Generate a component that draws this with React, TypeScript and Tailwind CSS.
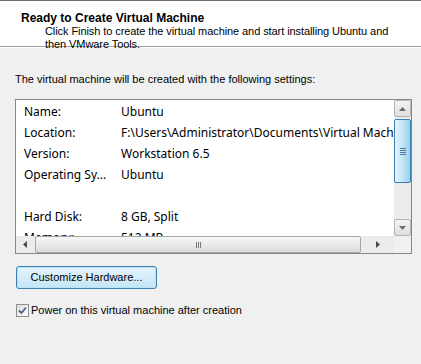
import React from "react";

const rows: [string, string][] = [
  ["Name:", "Ubuntu"],
  ["Location:", "F:\\Users\\Administrator\\Documents\\Virtual Machines\\Ubuntu"],
  ["Version:", "Workstation 6.5"],
  ["Operating Sy...", "Ubuntu"],
  ["", ""],
  ["Hard Disk:", "8 GB, Split"],
  ["Memory:", "512 MB"],
];

function ArrowUp() {
  return (
    <svg width="7" height="4" viewBox="0 0 7 4"><path d="M0 4 L3.5 0 L7 4 Z" fill="#6b6b6b" /></svg>
  );
}
function ArrowDown() {
  return (
    <svg width="7" height="4" viewBox="0 0 7 4"><path d="M0 0 L3.5 4 L7 0 Z" fill="#6b6b6b" /></svg>
  );
}
function ArrowLeft() {
  return (
    <svg width="4" height="7" viewBox="0 0 4 7"><path d="M4 0 L0 3.5 L4 7 Z" fill="#4a4a4a" /></svg>
  );
}
function ArrowRight() {
  return (
    <svg width="4" height="7" viewBox="0 0 4 7"><path d="M0 0 L4 3.5 L0 7 Z" fill="#4a4a4a" /></svg>
  );
}

export default function App() {
  return (
    <div className="w-[421px] h-[364px] bg-[#f0f0f0] overflow-hidden text-black" style={{ fontFamily: "'Liberation Sans', sans-serif" }}>
      <div className="h-[1px] bg-[#6e6e6e]" />
      <div className="h-[46px] bg-white border-b border-[#a0a0a0] pl-[21px] pt-[10px]">
        <div className="text-[12px] leading-[14px] font-bold">Ready to Create Virtual Machine</div>
        <div className="pl-[24px] text-[11px] leading-[13px] tracking-[-0.08px]">
          <div>Click Finish to create the virtual machine and start installing Ubuntu and</div>
          <div>then VMware Tools.</div>
        </div>
      </div>
      <div className="h-[1px] bg-white" />
      <div className="pl-[15px] pr-[10px]">
        <div className="mt-[25px] text-[11px] leading-[13px]">
          The virtual machine will be created with the following settings:
        </div>
        <div className="mt-[13px] w-[397px] h-[155px] border border-[#828790] bg-white flex flex-col">
          <div className="flex flex-1 min-h-0">
            <div className="flex-1 overflow-hidden pt-[1px] pl-[8px]" style={{ fontFamily: "'Noto Sans', sans-serif" }}>
              {rows.map(([k, v], i) => (
                <div key={i} className="flex h-[21px] items-center text-[12px] whitespace-nowrap">
                  <div className="w-[97px] shrink-0">{k}</div>
                  <div>{v}</div>
                </div>
              ))}
            </div>
            <div className="w-[17px] shrink-0 bg-[#ebebeb] flex flex-col">
              <div className="h-[17px] border border-[#b5b5b5] rounded-[2px] bg-gradient-to-b from-[#f4f4f4] to-[#dedede] flex items-center justify-center"><ArrowUp /></div>
              <div className="mt-[2px] h-[64px] border border-[#3c7fb1] rounded-[2px] bg-gradient-to-r from-[#e3f4fc] via-[#c4e5f6] to-[#98d1ef] flex items-center justify-center">
                <div className="flex flex-col gap-[1px]">
                  <div className="w-[6px] h-[1px] bg-[#4e7ea3]" />
                  <div className="w-[6px] h-[1px] bg-[#4e7ea3]" />
                  <div className="w-[6px] h-[1px] bg-[#4e7ea3]" />
                  <div className="w-[6px] h-[1px] bg-[#4e7ea3]" />
                </div>
              </div>
              <div className="flex-1" />
              <div className="h-[17px] border border-[#b5b5b5] rounded-[2px] bg-gradient-to-b from-[#f4f4f4] to-[#dedede] flex items-center justify-center"><ArrowDown /></div>
            </div>
          </div>
          <div className="h-[17px] flex shrink-0 bg-[#ebebeb]">
            <div className="w-[17px] flex items-center justify-center"><ArrowLeft /></div>
            <div className="ml-[2px] w-[326px] border border-[#a6a6a6] rounded-[2px] bg-gradient-to-b from-[#f7f7f7] to-[#dcdcdc] flex items-center justify-center">
              <div className="flex gap-[1px]">
                <div className="w-[1px] h-[6px] bg-[#7a7a7a]" />
                <div className="w-[1px] h-[6px] bg-[#7a7a7a]" />
                <div className="w-[1px] h-[6px] bg-[#7a7a7a]" />
              </div>
            </div>
            <div className="flex-1 flex items-center justify-center"><ArrowRight /></div>
            <div className="w-[17px] bg-[#f0f0f0]" />
          </div>
        </div>
        <button className="mt-[12px] ml-[1px] w-[141px] h-[23px] border border-[#3c7fb1] rounded-[3px] bg-gradient-to-b from-[#e5f4fc] to-[#c4e5f6] text-[11px] shadow-[inset_0_0_0_1px_#b7e3fa]">
          Customize Hardware...
        </button>
        <div className="mt-[13px] ml-[1px] flex items-center gap-[2px] text-[11px]">
          <div className="w-[13px] h-[13px] border border-[#8e8f8f] bg-gradient-to-br from-[#dcdcdc] to-white flex items-center justify-center">
            <svg width="9" height="9" viewBox="0 0 9 9"><path d="M1 4.5 L3.5 7 L8 1.5" stroke="#4a5f97" strokeWidth="1.8" fill="none" /></svg>
          </div>
          <span>Power on this virtual machine after creation</span>
        </div>
      </div>
    </div>
  );
}
